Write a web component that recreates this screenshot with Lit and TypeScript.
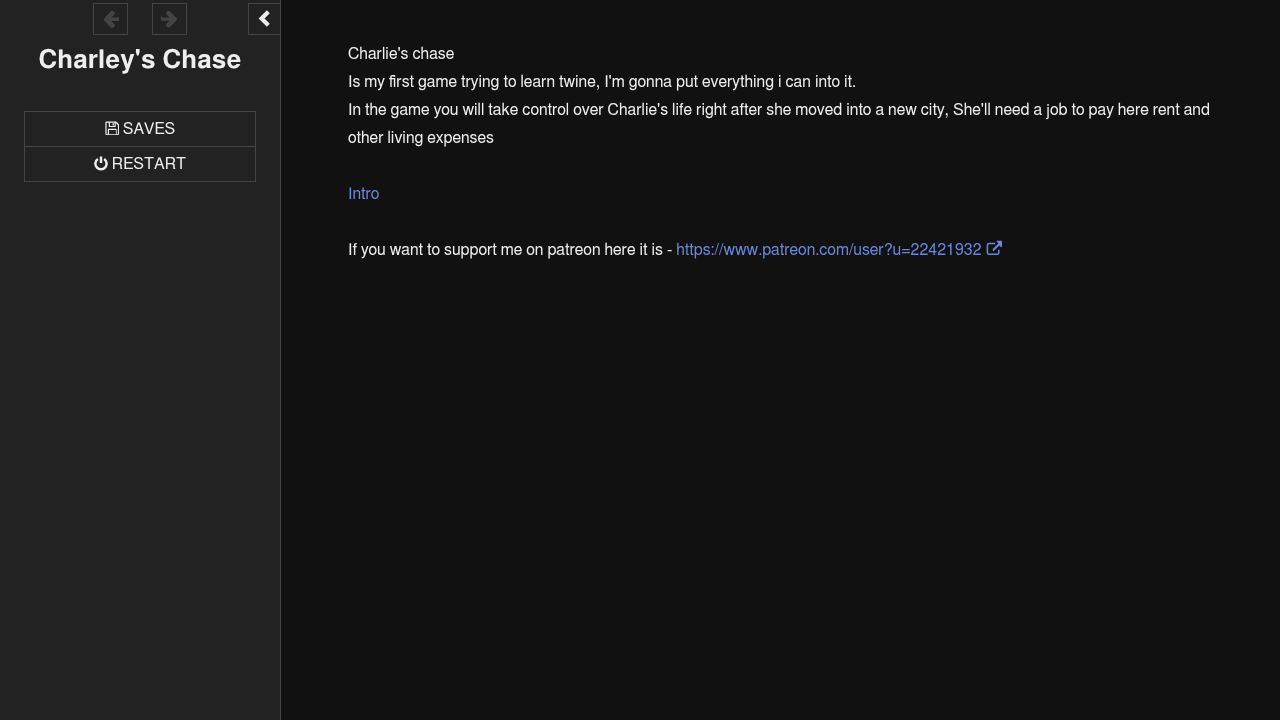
import { LitElement, css, html, svg } from "lit";
import { customElement } from "lit/decorators.js";

const icon = (box: string, body: unknown, cls = "") =>
  html`<svg class="icon ${cls}" viewBox=${box} aria-hidden="true">${body}</svg>`;

const arrowLeft = svg`<path fill="currentColor" d="M15.200 6.600h-7.400l3-3q.6-.6.6-1.300t-.6-1.300l-.7-.8q-.6-.5-1.300-.5t-1.300.5L.9 7.300q-.5.6-.5 1.300t.5 1.300l6.600 6.600q.6.5 1.300.5t1.300-.5l.7-.8q.6-.6.6-1.300t-.6-1.300l-3-3h7.400q.8 0 1.200-.5t.4-1.200v-1.200q0-.7-.4-1.200t-1.200-.5z"/>`;
const arrowRight = svg`<path fill="currentColor" d="M1.200 6.600h7.400l-3-3q-.6-.6-.6-1.300t.6-1.300l.7-.8q.6-.5 1.300-.5t1.300.5l6.600 6.700q.5.6.5 1.300t-.5 1.300l-6.600 6.600q-.6.5-1.300.5t-1.300-.5l-.7-.8q-.6-.6-.6-1.300t.6-1.300l3-3h-7.400q-.8 0-1.200-.5t-.4-1.200v-1.200q0-.7.4-1.200t1.200-.5z"/>`;
const chevronLeft = svg`<path fill="currentColor" d="M11.800 3.200 6.500 8.500l5.300 5.300-2.900 2.900L.6 8.500 8.900.3z"/>`;
const floppy = svg`<path fill="currentColor" fill-rule="evenodd" d="M1.500.6h9.700q.6 0 1.100.3l2.200 2.100q.5.5.5 1.200v9.700q0 1.100-1.100 1.100H1.500q-1.100 0-1.100-1.100V1.700Q.4.600 1.500.600zM1.700 1.900v12.200h1.300V9.300q0-.9.9-.9h7.700q.9 0 .9.9v4.800h1.300V4.400l-2.300-2.300v3.400q0 .9-.9.9H4.900q-.9 0-.9-.9V1.900zM4.300 9.700v4.400h7.400V9.700zM5.300 1.900v3.300h4.900V1.900zM8.100 2.400h1.400v2.300H8.100z"/>`;
const power = svg`<g fill="none" stroke="currentColor" stroke-width="2.600"><path d="M4.200 3.700a6 6 0 1 0 6.600 0"/><path d="M7.500 1v7"/></g>`;
const external = svg`<g fill="none" stroke="currentColor" stroke-width="1.500"><path d="M12.800 9.700v3q0 1.600-1.600 1.600H3q-1.600 0-1.600-1.600V5.200q0-1.600 1.600-1.600h6.200"/></g><path fill="currentColor" d="M10.300.8h5q.7 0 .7.7v5q0 .7-.6.7-.3 0-.5-.2l-1.600-1.600-5.600 5.700q-.3.3-.6 0L6.700 9.700q-.3-.3 0-.6l5.700-5.600-1.600-1.700q-.2-.2-.2-.5 0-.5.2-.5z"/>`;

@customElement("app-root")
export class AppRoot extends LitElement {
  render() {
    return html`
      <aside class="bar">
        <div class="tools">
          <button class="tool off" aria-label="Back">${icon("-1.500 0 17 17", arrowLeft)}</button>
          <button class="tool off" aria-label="Forward">${icon("0 0 17 17", arrowRight)}</button>
          <button class="tool toggle" aria-label="Hide sidebar">${icon("0 0 12 17", chevronLeft, "chev")}</button>
        </div>
        <div class="bar-body">
          <h1 class="title">Charley's Chase</h1>
          <nav class="menu">
            <a class="item">${icon("0 0 15 16", floppy, "small")} SAVES</a>
            <a class="item">${icon("0 .5 15 16", power, "small")} RESTART</a>
          </nav>
        </div>
      </aside>
      <main class="passage">
        <div>Charlie's chase</div>
        <div>Is my first game trying to learn twine, I'm gonna put everything i can into it.</div>
        <div>In the game you will take control over Charlie's life right after she moved into a new city, She'll need a job to pay here rent and other living expenses</div>
        <br />
        <div><a class="link">Intro</a></div>
        <br />
        <div>If you want to support me on patreon here it is - <a class="link">https://www.patreon.com/user?u=22421932 ${icon("0 0 17 16", external, "ext")}</a></div>
      </main>
    `;
  }

  static styles = css`
    :host {
      display: flex;
      min-height: 100vh;
      background: #111;
      color: #eee;
      font: 16px/28px Freesans, "Liberation Sans", sans-serif;
      font-kerning: none;
    }

    .bar {
      flex: none;
      width: 280px;
      border-right: 1px solid #444;
      background: #222;
    }

    .bar-body {
      will-change: opacity;
    }

    .tools {
      display: flex;
      height: 32px;
      padding: 3px 0 0 93px;
    }

    .tool {
      flex: none;
      box-sizing: border-box;
      width: 35px;
      height: 32px;
      margin: 0 24px 0 0;
      padding: 0;
      display: flex;
      align-items: center;
      justify-content: center;
      background: transparent;
      border: 1px solid #444;
      color: #444;
    }

    .toggle {
      width: 32px;
      margin: 0 0 0 37px;
      border-right: 0;
      color: #eee;
    }

    .tool .icon {
      width: 17px;
      height: 17px;
    }

    .tool .chev {
      width: 12px;
      height: 17px;
      margin: -1px 2px 0 0;
    }

    .title {
      margin: 0;
      padding-top: 9px;
      font-size: 26px;
      line-height: 32px;
      font-weight: 700;
      text-align: center;
    }

    .menu {
      margin: 35px 24px 0;
      border: 1px solid #444;
    }

    .item {
      display: flex;
      align-items: center;
      justify-content: center;
      gap: 4px;
      height: 34px;
      line-height: 34px;
    }

    .item + .item {
      border-top: 1px solid #444;
    }

    .small {
      width: 14px;
      height: 15px;
      margin-top: -1px;
    }

    .passage {
      flex: none;
      width: 864px;
      padding: 40px 0 0 67px;
      will-change: opacity;
    }

    .link {
      color: #68d;
    }

    .ext {
      width: 17px;
      height: 16px;
      vertical-align: -1px;
    }
  `;
}
